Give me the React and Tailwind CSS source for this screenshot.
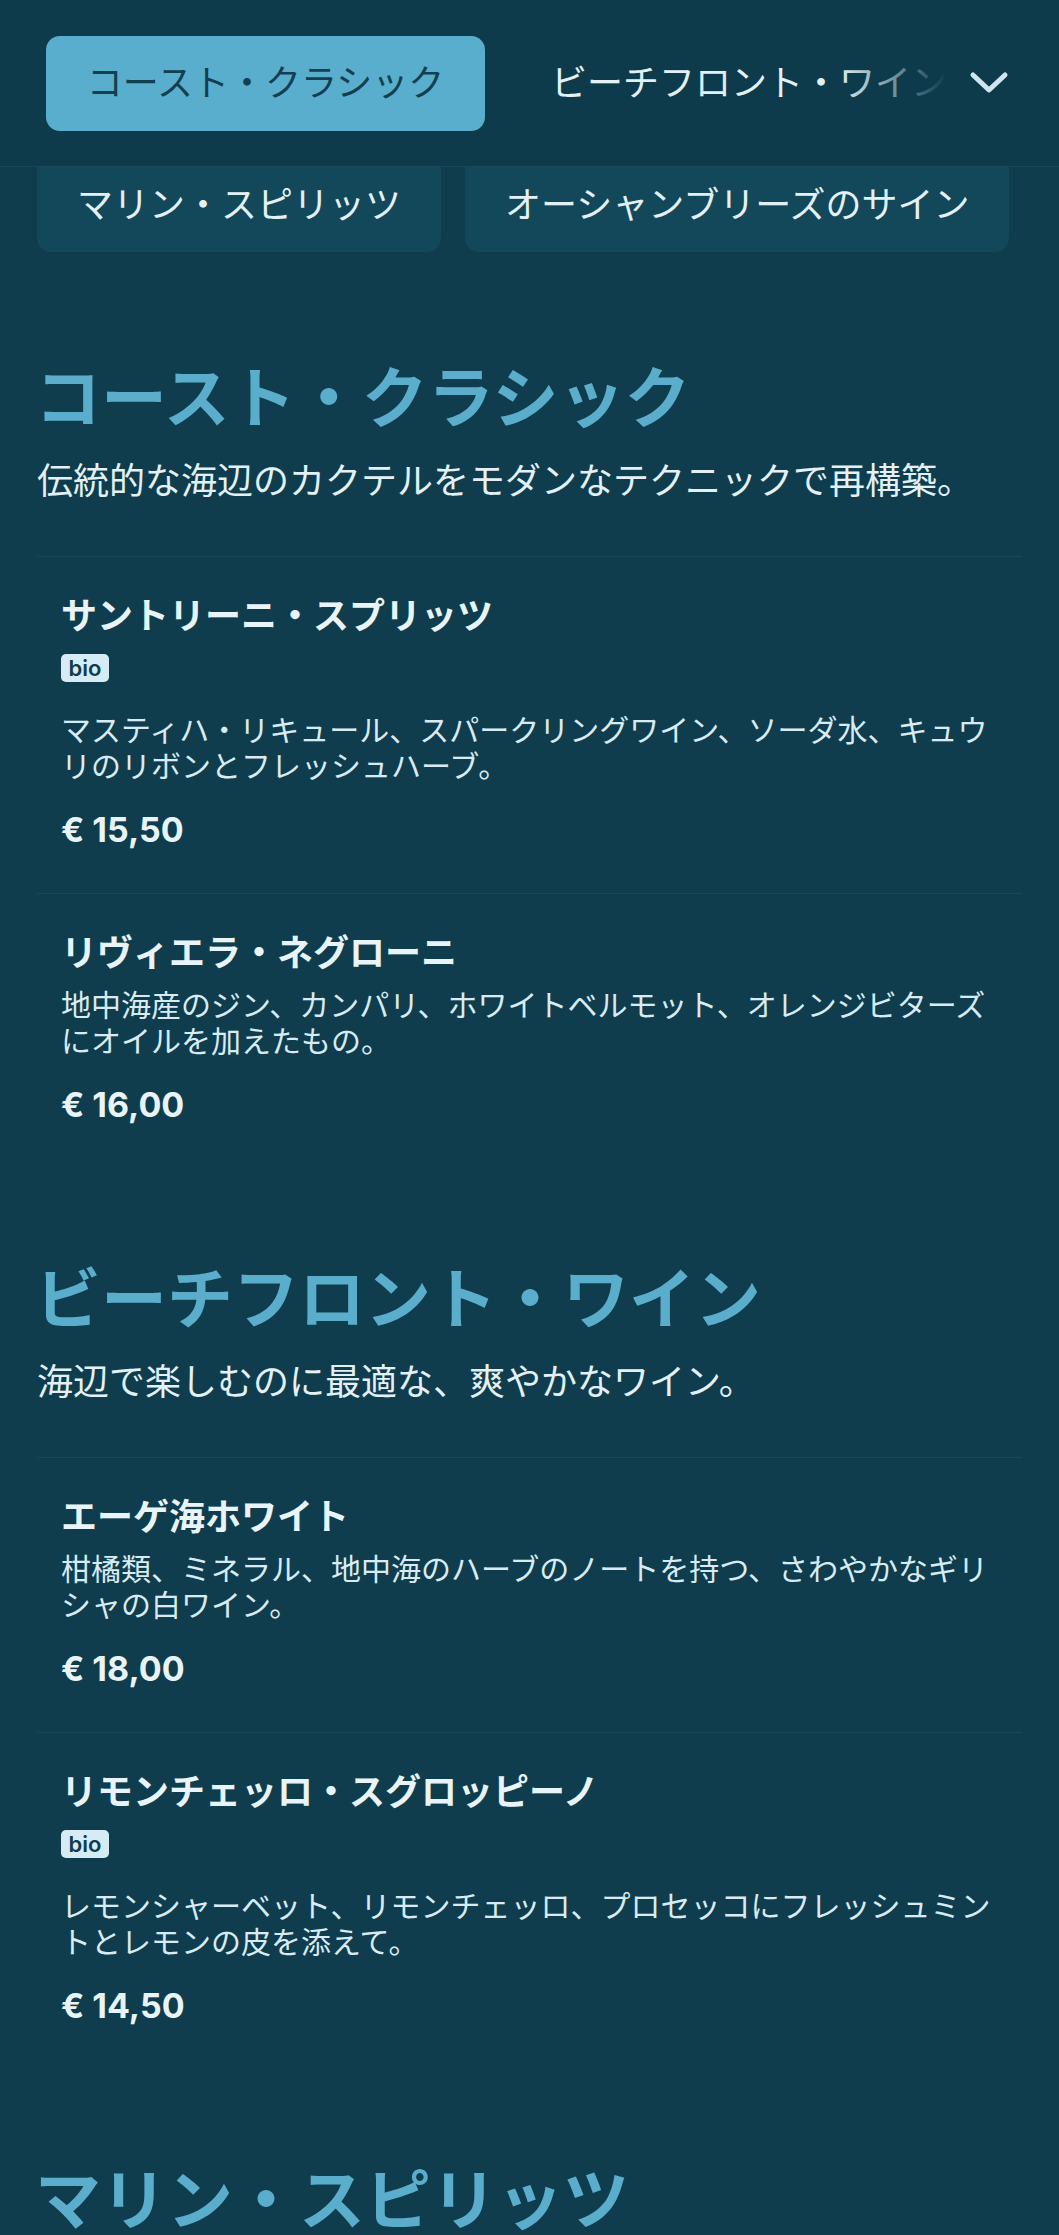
import React from "react";

const font = { fontFamily: '"Inter", "Noto Sans CJK JP", sans-serif' };

const sections = [
  {
    title: "コースト・クラシック",
    desc: "伝統的な海辺のカクテルをモダンなテクニックで再構築。",
    items: [
      {
        name: "サントリーニ・スプリッツ",
        bio: true,
        desc: "マスティハ・リキュール、スパークリングワイン、ソーダ水、キュウリのリボンとフレッシュハーブ。",
        price: "€ 15,50",
      },
      {
        name: "リヴィエラ・ネグローニ",
        desc: "地中海産のジン、カンパリ、ホワイトベルモット、オレンジビターズにオイルを加えたもの。",
        price: "€ 16,00",
      },
    ],
  },
  {
    title: "ビーチフロント・ワイン",
    desc: "海辺で楽しむのに最適な、爽やかなワイン。",
    items: [
      {
        name: "エーゲ海ホワイト",
        desc: "柑橘類、ミネラル、地中海のハーブのノートを持つ、さわやかなギリシャの白ワイン。",
        price: "€ 18,00",
      },
      {
        name: "リモンチェッロ・スグロッピーノ",
        bio: true,
        desc: "レモンシャーベット、リモンチェッロ、プロセッコにフレッシュミントとレモンの皮を添えて。",
        price: "€ 14,50",
      },
    ],
  },
  {
    title: "マリン・スピリッツ",
    desc: "",
    items: [],
  },
];

const Item = ({ item, last }) => (
  <div className={`flex flex-col px-[24px] pt-[36px] pb-[41px] ${last ? "" : "border-b border-[#17495b]"}`}>
    <h3 className="text-[36px] leading-[47px] font-bold text-[#e8f4f8]">{item.name}</h3>
    {item.bio && (
      <div className="flex h-[28px] mt-[14px] mb-[20px]">
        <span className="flex items-center justify-center w-[48px] h-[28px] rounded-[5px] bg-[#d5ecf5] text-[#0f3d4e] text-[22px] font-semibold leading-none">
          bio
        </span>
      </div>
    )}
    <p className="mt-[10px] text-[30px] leading-[36px] text-[#d9ebf2]">{item.desc}</p>
    <p className="mt-[24px] text-[34px] leading-[44px] font-bold text-[#e8f4f8]">{item.price}</p>
  </div>
);

export default function App() {
  return (
    <div style={font} className="w-full h-[2235px] overflow-hidden bg-[#0f3d4e]">
      {/* header */}
      <div className="h-[167px] flex items-center pl-[46px] pr-[50px] bg-[#0e3b4b] border-b border-[#164658]">
        <div className="shrink-0 w-[439px] h-[95px] rounded-[14px] bg-[#5aaecd] flex items-center justify-center text-[36px] text-[#133f50]">
          コースト・クラシック
        </div>
        <div className="relative flex-1 ml-[66px] mr-[22px] overflow-hidden">
          <span className="whitespace-nowrap text-[36px] text-[#e3f1f6]">ビーチフロント・ワイン</span>
          <div className="absolute inset-y-0 right-0 w-[110px] bg-gradient-to-r from-transparent to-[#0e3b4b]" />
        </div>
        <svg width="40" height="24" viewBox="0 0 40 24" className="shrink-0">
          <path d="M4 4 L20 19 L36 4" fill="none" stroke="#cfe6ef" strokeWidth="5" strokeLinecap="round" strokeLinejoin="round" />
        </svg>
      </div>

      {/* second row of tabs, partly hidden under header */}
      <div className="flex gap-[24px] px-[37px]">
        <div className="h-[85px] px-[40px] pb-[10px] rounded-b-[14px] bg-[#13475a] flex items-center text-[36px] text-[#e3f1f6]">
          マリン・スピリッツ
        </div>
        <div className="h-[85px] px-[40px] pb-[10px] rounded-b-[14px] bg-[#13475a] flex items-center text-[36px] text-[#e3f1f6]">
          オーシャンブリーズのサイン
        </div>
      </div>

      <div className="px-[37px] mt-[15px]">
        {sections.map((s, i) => (
          <section key={i} className="pt-[93px]">
            <h2 className="-ml-[2px] text-[66px] leading-[77px] font-bold text-[#5badcc]">{s.title}</h2>
            {s.desc && (
              <p className="mt-[20px] text-[36px] leading-[49px] text-[#e3f1f6]">{s.desc}</p>
            )}
            {s.items.length > 0 && (
              <div className="mt-[50px] border-t border-[#17495b]">
                {s.items.map((it, j) => (
                  <Item key={j} item={it} last={j === s.items.length - 1} />
                ))}
              </div>
            )}
          </section>
        ))}
      </div>
    </div>
  );
}
